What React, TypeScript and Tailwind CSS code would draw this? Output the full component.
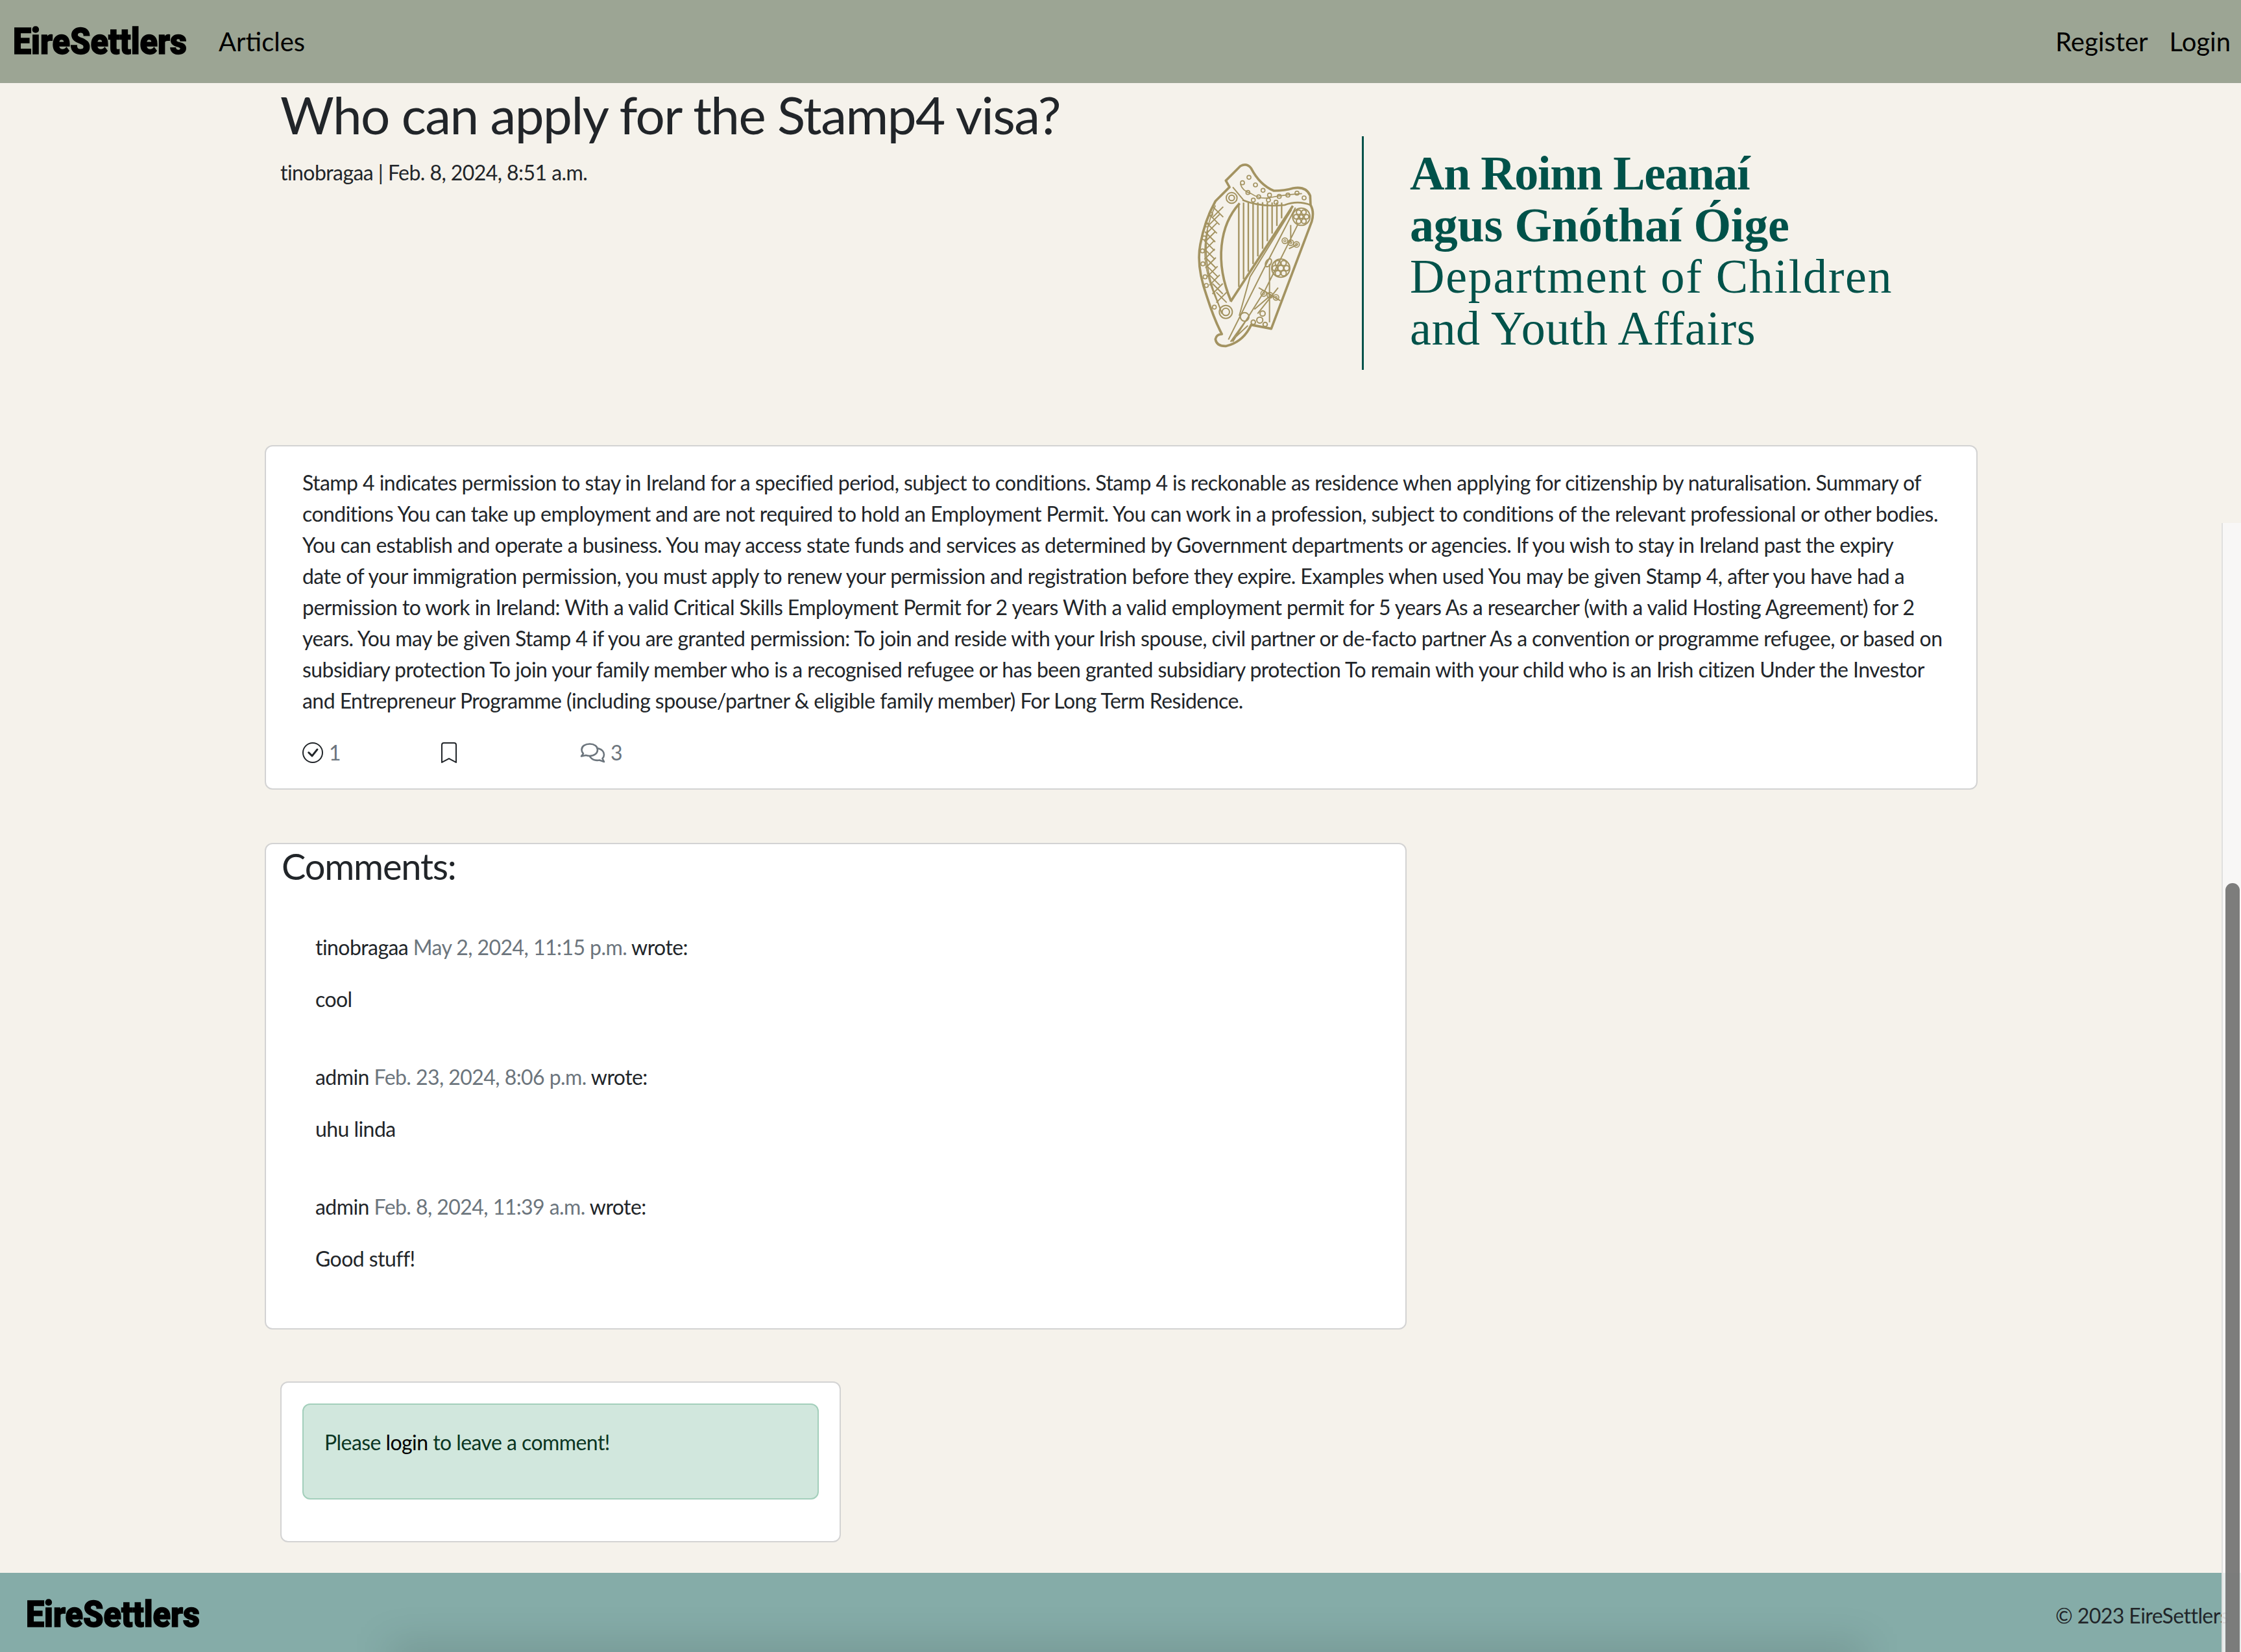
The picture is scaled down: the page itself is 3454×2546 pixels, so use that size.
import { BsBookmark, BsCheckCircle } from "react-icons/bs";

const articleLines = [
	"Stamp 4 indicates permission to stay in Ireland for a specified period, subject to conditions. Stamp 4 is reckonable as residence when applying for citizenship by naturalisation. Summary of",
	"conditions You can take up employment and are not required to hold an Employment Permit. You can work in a profession, subject to conditions of the relevant professional or other bodies.",
	"You can establish and operate a business. You may access state funds and services as determined by Government departments or agencies. If you wish to stay in Ireland past the expiry",
	"date of your immigration permission, you must apply to renew your permission and registration before they expire. Examples when used You may be given Stamp 4, after you have had a",
	"permission to work in Ireland: With a valid Critical Skills Employment Permit for 2 years With a valid employment permit for 5 years As a researcher (with a valid Hosting Agreement) for 2",
	"years. You may be given Stamp 4 if you are granted permission: To join and reside with your Irish spouse, civil partner or de-facto partner As a convention or programme refugee, or based on",
	"subsidiary protection To join your family member who is a recognised refugee or has been granted subsidiary protection To remain with your child who is an Irish citizen Under the Investor",
	"and Entrepreneur Programme (including spouse/partner & eligible family member) For Long Term Residence.",
];

const comments = [
	{ author: "tinobragaa", date: "May 2, 2024, 11:15 p.m.", body: "cool" },
	{ author: "admin", date: "Feb. 23, 2024, 8:06 p.m.", body: "uhu linda" },
	{ author: "admin", date: "Feb. 8, 2024, 11:39 a.m.", body: "Good stuff!" },
];

const Harp = () => {
	const strings = [328, 350, 372, 394, 416, 438, 460, 482, 504, 526];
	const lattice = [
		[232, 290],
		[215, 325],
		[203, 365],
		[195, 405],
		[192, 445],
		[193, 485],
		[198, 525],
		[206, 565],
		[216, 605],
		[230, 645],
		[248, 685],
	];
	const pillarDots = [
		[198, 300],
		[180, 350],
		[168, 410],
		[160, 470],
		[162, 530],
		[172, 590],
		[178, 630],
		[215, 730],
	];
	const neckDots = [
		[345, 155],
		[375, 130],
		[405, 165],
		[440, 190],
		[370, 200],
		[420, 220],
		[470, 212],
		[515, 218],
		[555, 212],
		[597, 203],
		[630, 225],
		[465, 235],
		[395, 235],
		[500, 245],
	];
	const flower = (cx: number, cy: number, r: number) =>
		[0, 60, 120, 180, 240, 300].map((a) => (
			<circle
				key={`${cx}-${a}`}
				cx={cx + Math.cos((a * Math.PI) / 180) * r}
				cy={cy + Math.sin((a * Math.PI) / 180) * r}
				r={r * 0.45}
			/>
		));

	return (
		<svg viewBox="0 0 780 960" className="w-[260px] h-[320px] shrink-0" fill="none" stroke="#a39361" strokeWidth="6">
			<path
				strokeWidth="11"
				strokeLinejoin="round"
				d="M268 145 L335 78 Q365 62 385 88 Q425 165 490 192 Q540 192 580 180 Q640 170 658 215 L660 258 Q678 290 665 335 L478 830 L385 812 Q350 890 270 910 Q225 912 220 878 Q225 855 250 855 Q215 790 180 680 Q130 540 150 440 Q170 330 220 240 L285 175 Z"
			/>
			<path strokeWidth="11" d="M332 250 C240 350 215 520 292 702" />
			<path strokeWidth="11" d="M578 262 L290 705" />
			<path strokeWidth="8" d="M345 235 Q430 270 540 258 Q600 235 660 258" />
			<path d="M300 175 L350 235 M572 280 L380 590 L330 770 M600 350 L450 650 L300 890 M355 800 L290 890 L370 815 M568 350 L568 432 M470 530 L470 800 M590 270 L440 560 L280 880 M560 460 L600 440 M420 640 L520 700 M400 740 L470 680 M415 760 L510 640" />
			<path d="M185 375 Q160 500 210 650 L250 760" />
			<path d="M220 260 Q165 380 172 500 Q178 600 240 730" strokeWidth="5" />
			{strings.map((x) => (
				<line key={x} x1={x} y1={x < 345 ? 255 : 245 + Math.abs(x - 440) * 0.02} x2={x} y2={265 + (560 - x) * 1.6} strokeWidth="7" />
			))}
			{lattice.map(([x, y]) => (
				<path key={y} d={`M${x - 24} ${y - 24} L${x + 24} ${y + 24} M${x + 24} ${y - 24} L${x - 24} ${y + 24}`} strokeWidth="6" />
			))}
			{pillarDots.map(([x, y]) => (
				<circle key={`${x}-${y}`} cx={x} cy={y} r="9" strokeWidth="5" />
			))}
			{neckDots.map(([x, y]) => (
				<circle key={`${x}-${y}`} cx={x} cy={y} r="9" strokeWidth="5" />
			))}
			<path d="M335 160 Q345 195 385 205 Q430 235 480 222 Q540 210 620 205" strokeWidth="5" />
			<circle cx="295" cy="225" r="25" />
			<circle cx="295" cy="225" r="13" />
			<circle cx="268" cy="752" r="30" />
			<circle cx="268" cy="752" r="17" />
			<circle cx="617" cy="312" r="40" />
			<circle cx="617" cy="312" r="9" />
			<g strokeWidth="6">{flower(617, 312, 24)}</g>
			<circle cx="522" cy="550" r="42" />
			<circle cx="522" cy="550" r="13" />
			<g strokeWidth="6">{flower(522, 550, 27)}</g>
			{[
				[541, 423],
				[568, 432],
				[595, 440],
				[443, 667],
				[472, 675],
				[500, 685],
			].map(([x, y]) => (
				<g key={x}>
					<circle cx={x} cy={y} r="13" strokeWidth="5" />
					<circle cx={x} cy={y} r="5" strokeWidth="4" />
				</g>
			))}
			<ellipse cx="465" cy="525" rx="12" ry="20" transform="rotate(30 465 525)" />
			<circle cx="355" cy="775" r="20" />
			<circle cx="425" cy="790" r="14" />
			<circle cx="438" cy="760" r="12" />
			<circle cx="395" cy="800" r="10" />
			<circle cx="450" cy="810" r="10" />
		</svg>
	);
};

const Chats = () => (
	<svg viewBox="0 0 40 32" className="w-[40px] h-[32px]" fill="none" stroke="#6c757d" strokeWidth="2.6" strokeLinejoin="round" strokeLinecap="round">
		<path d="M15 2.5 C8 2.5 2.5 6 2.5 11.5 C2.5 14 3.6 16 5 17.5 L2 21.5 L9 20 C11 20.6 13 21 15 21 C22 21 27 17 27 11.5 C27 6 22 2.5 15 2.5 Z" />
		<path d="M28.5 9.5 C33 11 37 14.5 37 19 C37 21.5 36 23.5 34.5 25 L37 30 L30 27.5 C24.5 28.5 19 27 15.5 22.5" />
	</svg>
);

export default function App() {
	return (
		<div className="relative h-[2546px] w-[3454px] overflow-hidden flex flex-col bg-[#f5f2eb] text-[#212529] font-['Lato',sans-serif] text-[32px] leading-[48px] tracking-[-0.56px]">
			<nav className="h-[128px] shrink-0 bg-[#9ca594] flex items-center pl-[20px] pr-[16px] text-black tracking-normal">
				<a className="w-[268px] h-[60px] flex items-center justify-center font-['Roboto',sans-serif] font-black text-[56px] [-webkit-text-stroke:1.5px_black]">
					<span className="scale-x-[0.9] whitespace-nowrap">EireSettlers</span>
				</a>
				<a className="ml-[49px] text-[40px]">Articles</a>
				<a className="ml-auto text-[40px]">Register</a>
				<a className="ml-[33px] text-[40px]">Login</a>
			</nav>

			<div className="flex h-[558px] shrink-0">
				<div className="w-[1800px] pl-[432px] shrink-0">
					<h1 className="text-[80px] leading-[96px] tracking-[-1.55px]">Who can apply for the Stamp4 visa?</h1>
					<p className="mt-[18px]">tinobragaa | Feb. 8, 2024, 8:51 a.m.</p>
				</div>
				<div className="flex items-center h-[360px] mt-[82px]">
					<Harp />
					<div className="w-[3px] h-[360px] bg-[#00524a] ml-[39px]" />
					<div className="ml-[71px] -mt-[6px] font-['Liberation_Serif',serif] text-[74px] leading-[79.5px] text-[#00524a] whitespace-nowrap">
						<div className="font-bold tracking-[-1.3px]">An Roinn Leanaí</div>
						<div className="font-bold tracking-[-0.2px]">agus Gnóthaí Óige</div>
						<div className="tracking-[1.7px]">Department of Children</div>
						<div className="tracking-[0.6px]">and Youth Affairs</div>
					</div>
				</div>
			</div>

			<section className="ml-[408px] w-[2640px] h-[531px] shrink-0 bg-white border-2 border-[#d3d3d3] rounded-[12px] pt-[32px] pl-[56px]">
				{articleLines.map((line) => (
					<div key={line} className="whitespace-nowrap">
						{line}
					</div>
				))}
				<div className="flex items-center h-[32px] mt-[40px] text-[#6c757d]">
					<BsCheckCircle size={32} className="text-[#212529]" />
					<span className="ml-[9px] w-[169px]">1</span>
					<BsBookmark size={32} className="text-[#212529]" />
					<span className="ml-[186px]">
						<Chats />
					</span>
					<span className="ml-[7px]">3</span>
				</div>
			</section>

			<section className="ml-[408px] mt-[82px] w-[1760px] h-[750px] shrink-0 bg-white border-2 border-[#d3d3d3] rounded-[12px] pl-[24px]">
				<h3 className="text-[56px] leading-[67px] tracking-[-1.2px]">Comments:</h3>
				<div className="mt-[68px] pl-[52px]">
					{comments.map((c) => (
						<div key={c.date} className="mb-[72px]">
							<p className="mb-[32px]">
								{c.author} <span className="text-[#6c757d]">{c.date}</span> wrote:
							</p>
							<p>{c.body}</p>
						</div>
					))}
				</div>
			</section>

			<section className="ml-[432px] mt-[80px] w-[864px] h-[248px] shrink-0 bg-white border-2 border-[#d3d3d3] rounded-[12px] p-[32px]">
				<div className="h-[148px] bg-[#d1e7dd] border-2 border-[#a3cfbb] rounded-[12px] pt-[34px] pl-[32px] text-[#0a3622]">
					Please <a className="text-black">login</a> to leave a comment!
				</div>
			</section>

			<footer className="relative mt-auto h-[122px] shrink-0 bg-[#85aca8] flex items-center pl-[40px] pr-[19px] pt-[6px] overflow-hidden">
				<div className="absolute left-[600px] right-[580px] -bottom-[30px] h-[40px] bg-black/15 blur-[30px]" />
				<a className="relative w-[268px] h-[60px] flex items-center justify-center font-['Roboto',sans-serif] font-black text-[56px] tracking-normal text-black [-webkit-text-stroke:1.5px_black]">
					<span className="scale-x-[0.9] whitespace-nowrap">EireSettlers</span>
				</a>
				<span className="relative ml-auto mt-[4px] text-[32px] whitespace-nowrap">© 2023 EireSettlers</span>
			</footer>

			{/* overlay scrollbar */}
			<div className="absolute right-0 top-[806px] bottom-0 w-[30px] bg-[#f8f8f8]/85 border-l-2 border-[#ddd]/90">
				<div className="absolute left-[4px] right-[2px] top-[555px] bottom-0 rounded-t-[12px] bg-[#6f6f6f]/90" />
			</div>
		</div>
	);
}
